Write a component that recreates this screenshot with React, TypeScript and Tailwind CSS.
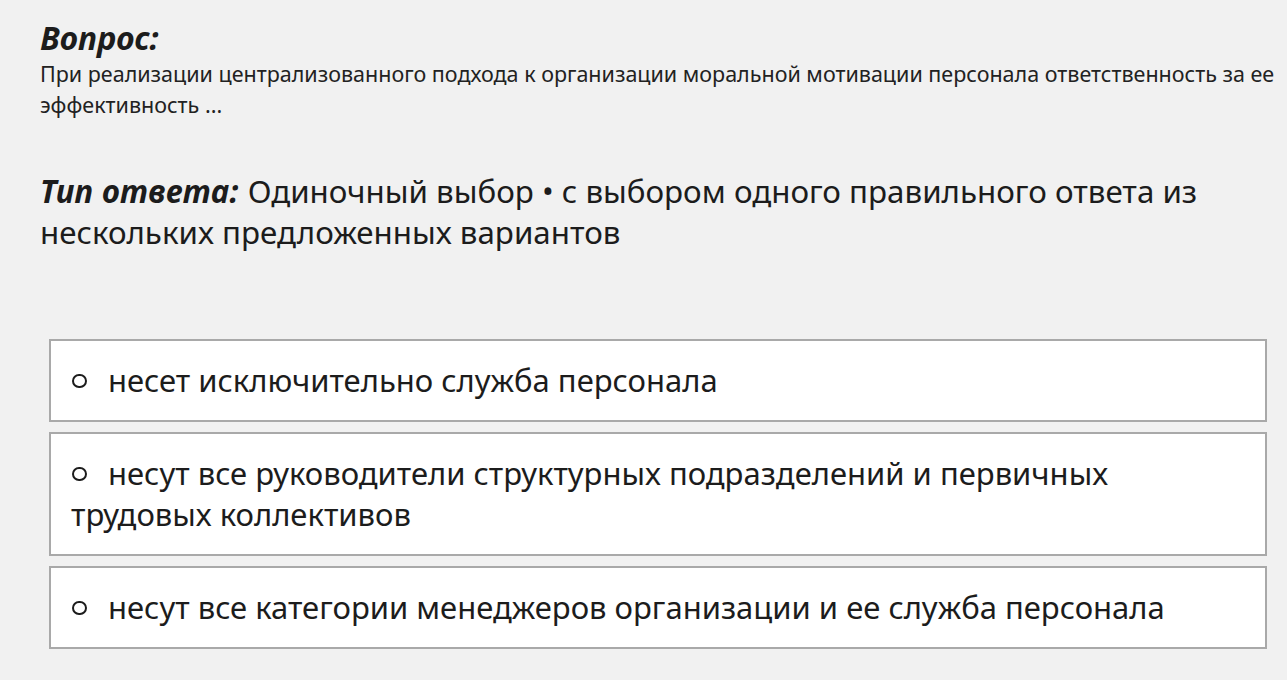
import React from "react"

const answers = [
  "несет исключительно служба персонала",
  "несут все руководители структурных подразделений и первичных трудовых коллективов",
  "несут все категории менеджеров организации и ее служба персонала",
]

export default function App() {
  return (
    <div className="min-h-[680px] w-full bg-[#f1f1f1] text-[#1c1c1c] font-['Noto_Sans',sans-serif] pl-[40px] pr-[10px] pt-[18px]">
      <div className="text-[32px] leading-[40px] font-bold italic">Вопрос:</div>
      <div className="text-[21.5px] leading-[31px] text-[#222]">
        При реализации централизованного подхода к организации моральной мотивации персонала ответственность за ее эффективность ...
      </div>

      <div className="mt-[51px] text-[31.3px] leading-[41px] pr-[60px]">
        <span className="font-bold italic tracking-[0.3px] pr-[9px]">Тип ответа:</span>Одиночный выбор • с выбором одного правильного ответа из нескольких предложенных вариантов
      </div>

      <div className="mt-[86px] ml-[9px] mr-[10px] flex flex-col gap-[10px]">
        {answers.map((a) => (
          <div key={a} className="bg-white border-2 border-[#a9a9a9] px-[20px] py-[19px] text-[31px] leading-[41px]">
            <span className="inline-block w-[15px] h-[14px] rounded-full border-[2.5px] border-[#1c1c1c] mr-[21px] ml-[1px] align-[4px]"></span>
            {a}
          </div>
        ))}
      </div>
    </div>
  )
}
